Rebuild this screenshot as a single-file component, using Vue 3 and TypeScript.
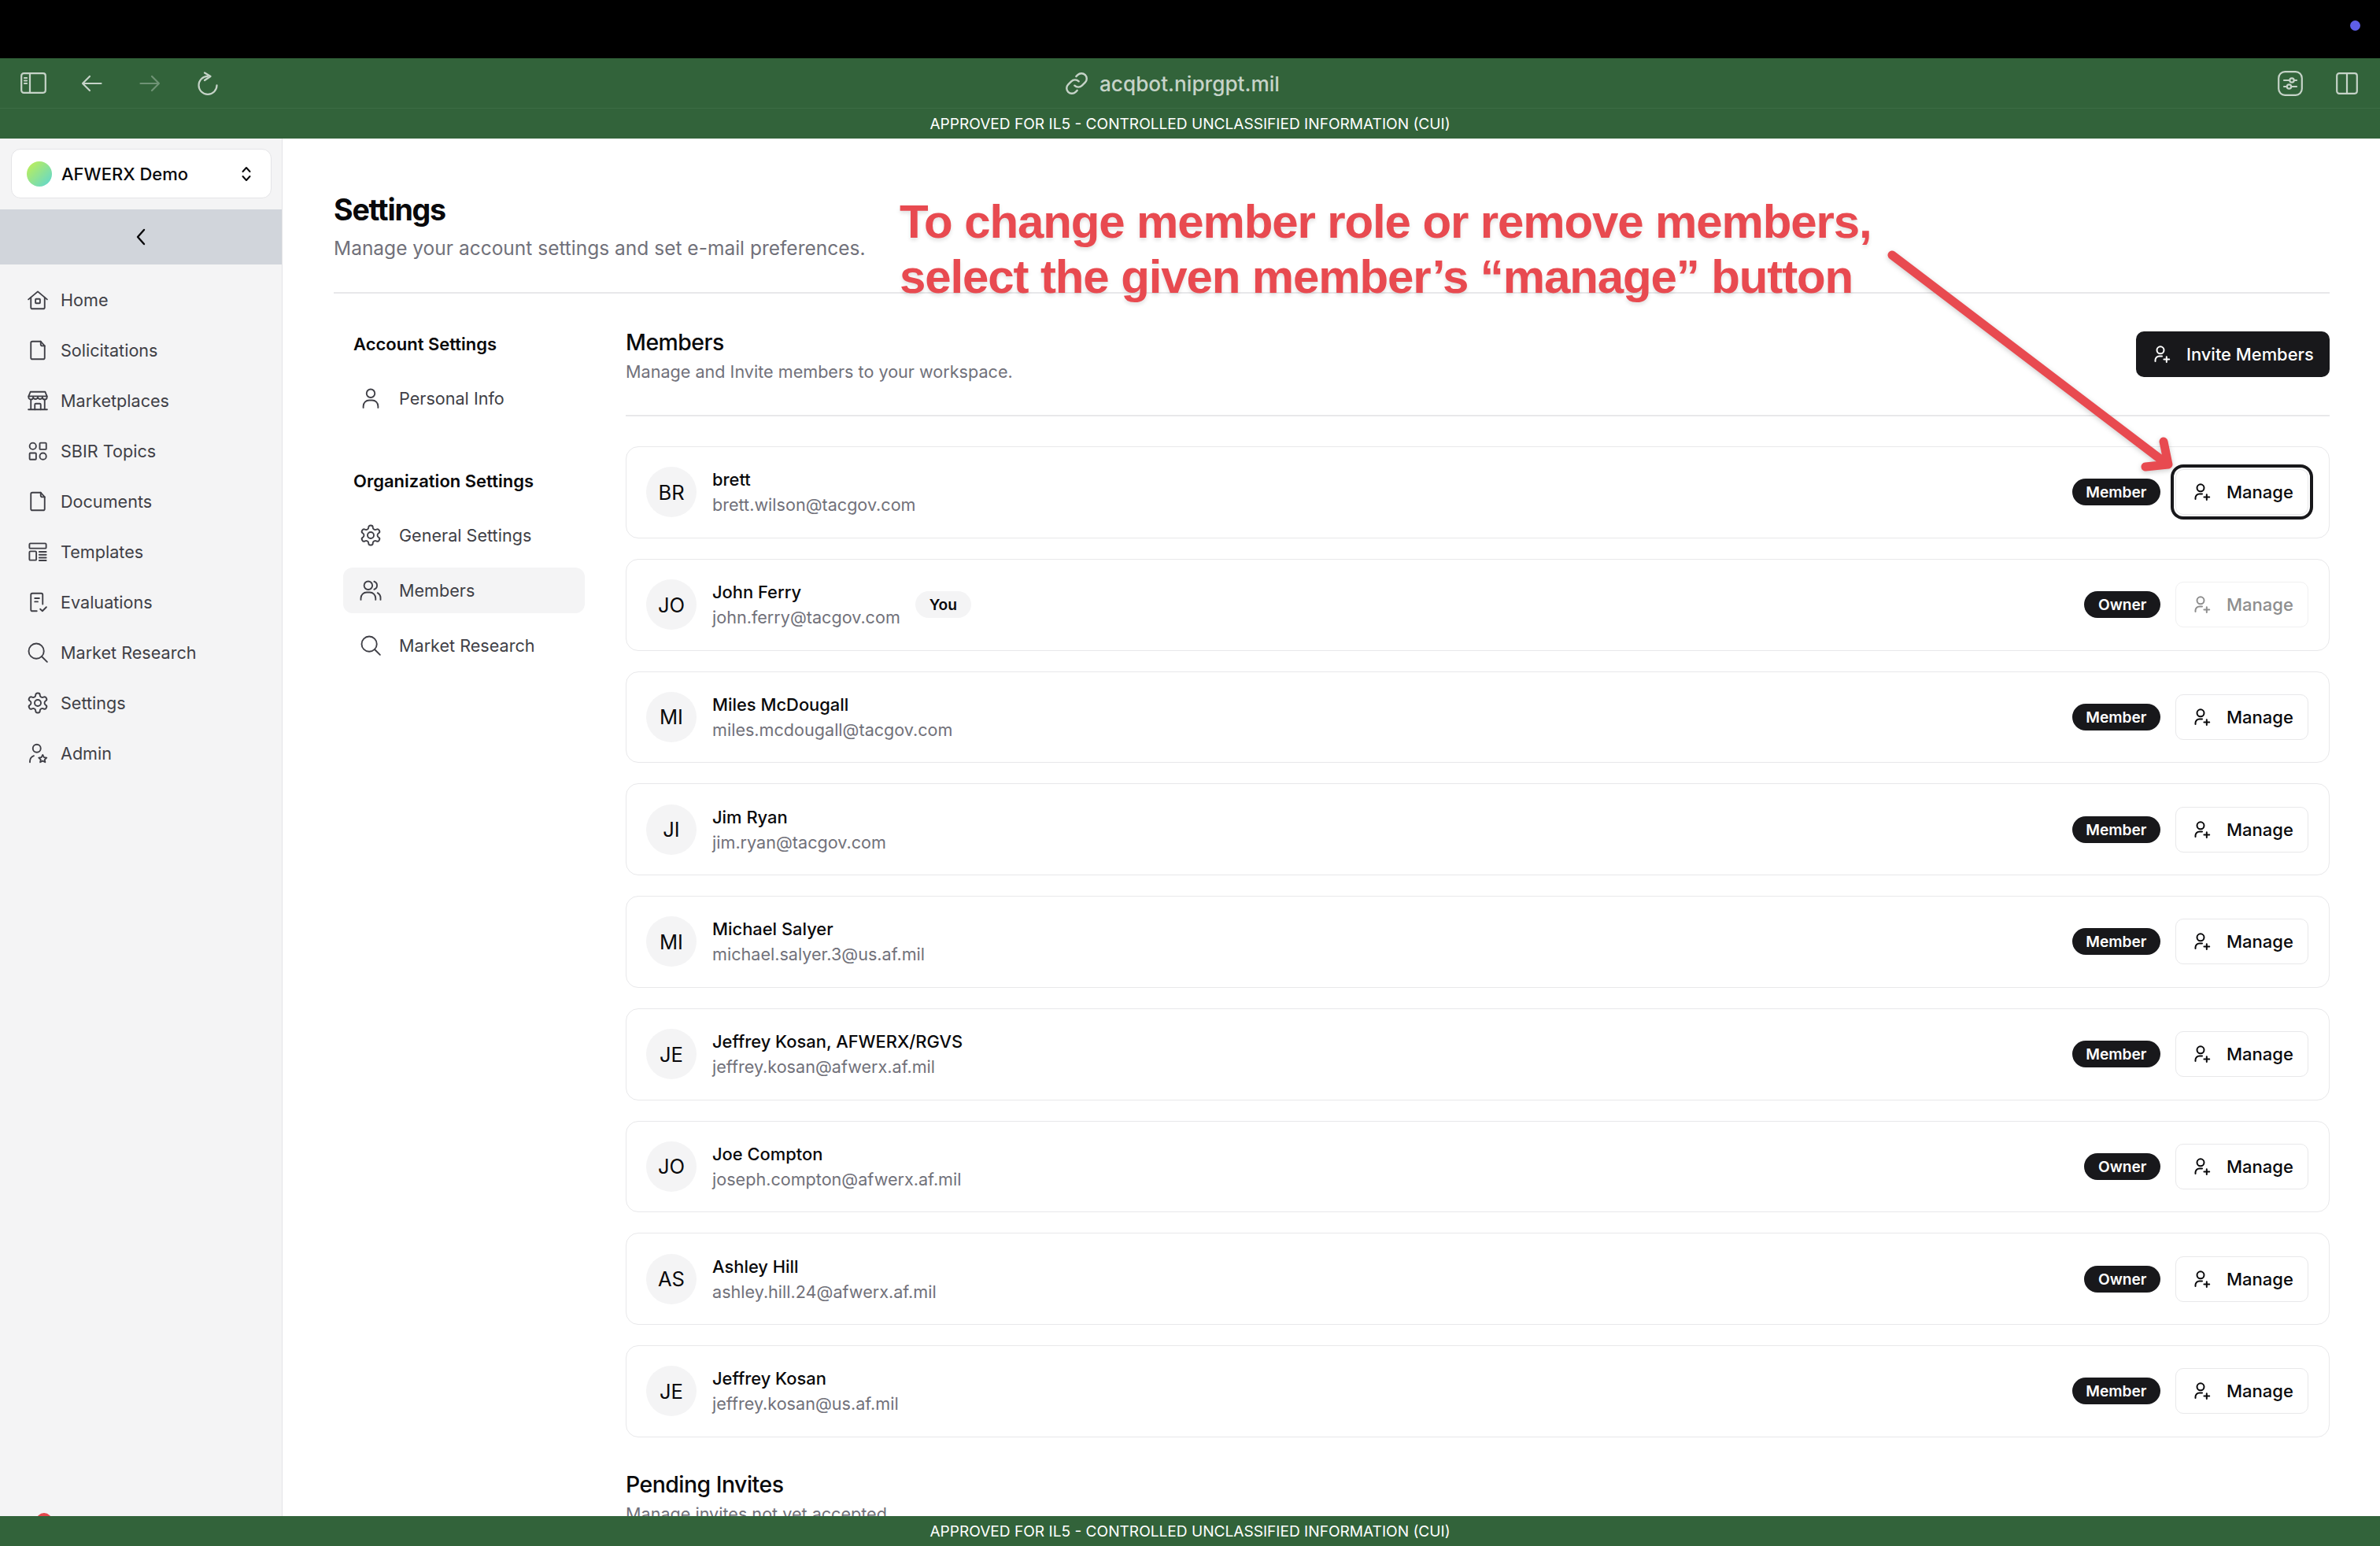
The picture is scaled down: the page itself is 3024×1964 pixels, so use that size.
<script setup lang="ts">
const icons: Record<string, string> = {
  home: '<path d="M2.5 11.5 12 3.5l9.5 8"/><path d="M5 9.8V19.5a1.5 1.5 0 0 0 1.5 1.5h11a1.5 1.5 0 0 0 1.5-1.5V9.8"/><rect x="9.7" y="11" width="4.6" height="4.4" rx=".6"/>',
  doc: '<path d="M5 4.5A1.5 1.5 0 0 1 6.5 3H15l4 4.5V19.500A1.500 1.500 0 0 1 17.500 21h-11A1.500 1.500 0 0 1 5 19.500z"/><path d="M15 3v3a1.500 1.500 0 0 0 1.500 1.500H19"/>',
  store: '<path d="M4.500 3h15l1.800 4.500v1a2.300 2.300 0 0 1-4.600 0 2.400 2.400 0 0 1-4.700 0 2.400 2.400 0 0 1-4.700 0 2.300 2.300 0 0 1-4.600 0v-1z"/><path d="M2.700 7.500h18.600M5 11v9.500M19 11v9.500M2.500 21h19"/><path d="M9 21v-5a1 1 0 0 1 1-1h4a1 1 0 0 1 1 1v5"/>',
  topics: '<circle cx="7" cy="7" r="3.300"/><rect x="14" y="3.700" width="6.600" height="6.600" rx=".8"/><rect x="3.700" y="14" width="6.600" height="6.600" rx=".8"/><circle cx="17.300" cy="17.300" r="3.300"/>',
  templates: '<rect x="3.500" y="3.500" width="17" height="5" rx="1"/><rect x="3.500" y="11.500" width="7" height="9" rx="1"/><path d="M13.500 12h7M13.500 15h7M13.500 18h7M13.500 20.800h7"/>',
  evals: '<path d="M11 21H6.500A1.500 1.500 0 0 1 5 19.500v-15A1.500 1.500 0 0 1 6.500 3h9A1.500 1.500 0 0 1 17 4.500V14"/><path d="M9 8h4.500M9 11.500h3"/><path d="m14.500 19 2.200 2 4-4"/>',
  search: '<circle cx="10.500" cy="10.500" r="7.700"/><path d="m16.200 16.200 5.300 5.300"/>',
  gear: '<path d="M12.220 2h-.44a2 2 0 0 0-2 2v.18a2 2 0 0 1-1 1.730l-.43.250a2 2 0 0 1-2 0l-.15-.080a2 2 0 0 0-2.730.730l-.22.380a2 2 0 0 0 .73 2.730l.15.100a2 2 0 0 1 1 1.720v.510a2 2 0 0 1-1 1.740l-.15.090a2 2 0 0 0-.73 2.730l.22.380a2 2 0 0 0 2.730.730l.15-.080a2 2 0 0 1 2 0l.43.250a2 2 0 0 1 1 1.730V20a2 2 0 0 0 2 2h.44a2 2 0 0 0 2-2v-.18a2 2 0 0 1 1-1.730l.43-.250a2 2 0 0 1 2 0l.15.080a2 2 0 0 0 2.730-.730l.22-.390a2 2 0 0 0-.73-2.730l-.15-.080a2 2 0 0 1-1-1.740v-.5a2 2 0 0 1 1-1.740l.15-.090a2 2 0 0 0 .73-2.730l-.22-.380a2 2 0 0 0-2.730-.730l-.15.080a2 2 0 0 1-2 0l-.43-.250a2 2 0 0 1-1-1.730V4a2 2 0 0 0-2-2z"/><circle cx="12" cy="12" r="3.200"/>',
  admin: '<circle cx="11" cy="7" r="4"/><path d="M4 21v-1a6 6 0 0 1 4-5.500"/><path d="m17 13.500 1.300 2.600 2.700.4-2 1.900.5 2.600-2.500-1.300-2.500 1.300.5-2.600-2-1.900 2.700-.4z"/>',
  user: '<circle cx="12" cy="7" r="4.200"/><path d="M4.500 21.500v-1.500a6 6 0 0 1 6-6h3a6 6 0 0 1 6 6v1.500"/>',
  users: '<circle cx="9.500" cy="7" r="4.200"/><path d="M2 21.500v-1.500a6 6 0 0 1 6-6h3a6 6 0 0 1 6 6v1.500"/><path d="M15.500 3a4.200 4.200 0 0 1 0 8M19 14.500a6 6 0 0 1 3 5.500v1.500"/>',
  userplus: '<circle cx="10" cy="6.800" r="4.500"/><path d="M3.500 21v-1.500a5 5 0 0 1 5-5h3.500"/><path d="M17.800 15.200v6.800M14.400 18.600h6.800"/>',
}

const sideNav = [
  { label: 'Home', icon: 'home' },
  { label: 'Solicitations', icon: 'doc' },
  { label: 'Marketplaces', icon: 'store' },
  { label: 'SBIR Topics', icon: 'topics' },
  { label: 'Documents', icon: 'doc' },
  { label: 'Templates', icon: 'templates' },
  { label: 'Evaluations', icon: 'evals' },
  { label: 'Market Research', icon: 'search' },
  { label: 'Settings', icon: 'gear' },
  { label: 'Admin', icon: 'admin' },
]

const members = [
  { initials: 'BR', name: 'brett', email: 'brett.wilson@tacgov.com', role: 'Member', focus: true },
  { initials: 'JO', name: 'John Ferry', email: 'john.ferry@tacgov.com', role: 'Owner', you: true, disabled: true },
  { initials: 'MI', name: 'Miles McDougall', email: 'miles.mcdougall@tacgov.com', role: 'Member' },
  { initials: 'JI', name: 'Jim Ryan', email: 'jim.ryan@tacgov.com', role: 'Member' },
  { initials: 'MI', name: 'Michael Salyer', email: 'michael.salyer.3@us.af.mil', role: 'Member' },
  { initials: 'JE', name: 'Jeffrey Kosan, AFWERX/RGVS', email: 'jeffrey.kosan@afwerx.af.mil', role: 'Member' },
  { initials: 'JO', name: 'Joe Compton', email: 'joseph.compton@afwerx.af.mil', role: 'Owner' },
  { initials: 'AS', name: 'Ashley Hill', email: 'ashley.hill.24@afwerx.af.mil', role: 'Owner' },
  { initials: 'JE', name: 'Jeffrey Kosan', email: 'jeffrey.kosan@us.af.mil', role: 'Member' },
]

const banner = 'APPROVED FOR IL5 - CONTROLLED UNCLASSIFIED INFORMATION (CUI)'
</script>

<template>
  <div class="app">
    <div class="notch"><span class="cam"></span></div>

    <header class="toolbar">
      <div class="tb-left">
        <svg class="tb-ico sb" viewBox="0 0 33 27"><rect x="1.200" y="1.200" width="30.600" height="24.600" rx="3"/><path d="M12 1.500v24M5 7h3M5 10.500h3M5 14h3"/></svg>
        <svg class="tb-ico ar" viewBox="0 0 27 22"><path d="M25.500 11H2M11 2 2 11l9 9"/></svg>
        <svg class="tb-ico ar dim" viewBox="0 0 27 22"><path d="M1.500 11H25M16 2l9 9-9 9"/></svg>
        <svg class="tb-ico rl" viewBox="0 0 26 30"><path d="M13 5.800A11.500 11.500 0 1 0 24.500 17.300"/><path d="M9 1.500 16.500 6 9 11"/></svg>
      </div>
      <div class="url">
        <svg class="link" viewBox="0 0 24 24"><path d="M10 14a5 5 0 0 0 7.100 0l3-3A5 5 0 0 0 13 3.900l-1.500 1.500"/><path d="M14 10a5 5 0 0 0-7.100 0l-3 3A5 5 0 0 0 11 20.100l1.500-1.500"/></svg>
        <span>acqbot.niprgpt.mil</span>
      </div>
      <div class="tb-right">
        <svg class="tb-ico flt" viewBox="0 0 32 32"><rect x="1.200" y="1.200" width="29.600" height="29.600" rx="8"/><path d="M8 12h6.500M21 12h3M8 20h3.500M18 20h6"/><circle cx="18" cy="12" r="2.700"/><circle cx="14.500" cy="20" r="2.700"/></svg>
        <svg class="tb-ico spl" viewBox="0 0 28 28"><rect x="1.200" y="1.200" width="25.600" height="25.600" rx="3"/><path d="M14 1.500v25"/></svg>
      </div>
    </header>

    <div class="banner">{{ banner }}</div>

    <div class="page">
      <aside class="sidebar">
        <button class="workspace">
          <span class="ws-dot"></span>
          <span class="ws-name">AFWERX Demo</span>
          <svg class="ws-caret" viewBox="0 0 14 22"><path d="m2.500 8 4.500-5 4.500 5M2.500 14l4.500 5 4.500-5"/></svg>
        </button>
        <div class="collapse">
          <svg viewBox="0 0 12 22"><path d="M10 2 2 11l8 9"/></svg>
        </div>
        <nav class="side-nav">
          <div v-for="item in sideNav" :key="item.label" class="side-item">
            <svg class="ico" viewBox="0 0 24 24" v-html="icons[item.icon]"></svg>
            <span>{{ item.label }}</span>
          </div>
        </nav>
        <span class="side-dot"></span>
      </aside>

      <main class="main">
        <h1 class="title">Settings</h1>
        <p class="subtitle">Manage your account settings and set e-mail preferences.</p>
        <div class="rule"></div>

        <div class="columns">
          <div class="sub-nav">
            <h3 class="group">Account Settings</h3>
            <div class="sub-item">
              <svg class="ico" viewBox="0 0 24 24" v-html="icons.user"></svg><span>Personal Info</span>
            </div>
            <h3 class="group second">Organization Settings</h3>
            <div class="sub-item">
              <svg class="ico" viewBox="0 0 24 24" v-html="icons.gear"></svg><span>General Settings</span>
            </div>
            <div class="sub-item active">
              <svg class="ico" viewBox="0 0 24 24" v-html="icons.users"></svg><span>Members</span>
            </div>
            <div class="sub-item">
              <svg class="ico" viewBox="0 0 24 24" v-html="icons.search"></svg><span>Market Research</span>
            </div>
          </div>

          <section class="content">
            <div class="sec-head">
              <div>
                <h2 class="sec-title">Members</h2>
                <p class="sec-sub">Manage and Invite members to your workspace.</p>
              </div>
              <button class="invite">
                <svg class="ico-sm" viewBox="0 0 24 24" v-html="icons.userplus"></svg>
                <span>Invite Members</span>
              </button>
            </div>

            <div class="cards">
              <article v-for="m in members" :key="m.email" class="card">
                <div class="avatar">{{ m.initials }}</div>
                <div class="who">
                  <div class="name">{{ m.name }}</div>
                  <div class="email">{{ m.email }}</div>
                </div>
                <span v-if="m.you" class="you">You</span>
                <span class="role">{{ m.role }}</span>
                <button class="manage" :class="{ focus: m.focus, disabled: m.disabled }">
                  <svg class="ico-sm" viewBox="0 0 24 24" v-html="icons.userplus"></svg>
                  <span>Manage</span>
                </button>
              </article>
            </div>

            <h2 class="sec-title pending">Pending Invites</h2>
            <p class="sec-sub">Manage invites not yet accepted.</p>
          </section>
        </div>
      </main>
    </div>

    <footer class="banner bottom">{{ banner }}</footer>

    <div class="note">To change member role or remove members,<br />select the given member’s “manage” button</div>
    <svg class="arrow" width="3024" height="1964" viewBox="0 0 3024 1964">
      <path d="M2404 324 2750 587M2749 561l6 29-29 3" />
    </svg>
  </div>
</template>

<style>
html, body { margin: 0; background: #fff; }
</style>

<style scoped>
.app {
  position: relative;
  width: 3024px;
  height: 1964px;
  overflow: hidden;
  display: flex;
  flex-direction: column;
  font-family: Inter, "Liberation Sans", sans-serif;
  color: #09090b;
}
.notch { height: 74px; background: #000; display: flex; justify-content: flex-end; flex: none; }
.cam { width: 13px; height: 13px; border-radius: 50%; background: #5f5fe8; margin: 26px 25px 0 0; }

.toolbar {
  height: 64px;
  flex: none;
  background: #32633a;
  border-bottom: 1px solid #3d6c44;
  box-sizing: border-box;
  display: flex;
  align-items: center;
  justify-content: space-between;
  position: relative;
  padding: 0 28px 0 26px;
}
.tb-left, .tb-right { display: flex; align-items: center; }
.tb-ico { fill: none; stroke: #c6d3c8; stroke-width: 2.2; stroke-linecap: round; stroke-linejoin: round; display: block; }
.sb { width: 33px; height: 27px; margin-right: 44px; }
.ar { width: 27px; height: 22px; margin-right: 47px; }
.ar.dim { stroke: #6f9375; margin-right: 47px; }
.rl { width: 26px; height: 30px; }
.flt { width: 32px; height: 32px; margin-right: 42px; }
.spl { width: 28px; height: 28px; }
.url {
  position: absolute;
  left: 1352px;
  top: 0;
  height: 64px;
  display: flex;
  align-items: center;
  gap: 13px;
  font-size: 26.2px;
  font-weight: 500;
  color: #c6d3c8;
}
.link { width: 32px; height: 32px; fill: none; stroke: #c6d3c8; stroke-width: 1.8; stroke-linecap: round; }

.banner {
  flex: none;
  height: 38px;
  background: #32633a;
  color: #fff;
  font-size: 19.1px;
  line-height: 38px;
  text-align: center;
}
.page { height: 1750px; flex: none; display: flex; overflow: hidden; }

.sidebar {
  position: relative;
  width: 359px;
  flex: none;
  box-sizing: border-box;
  background: #f4f4f5;
  border-right: 1px solid #e4e4e7;
  padding-top: 13px;
}
.workspace {
  display: flex;
  align-items: center;
  width: 331px;
  height: 63px;
  margin: 0 0 14px 14px;
  padding: 0 24px 0 19px;
  box-sizing: border-box;
  background: #fff;
  border: 1.6px solid #e4e4e7;
  border-radius: 12px;
  font: 500 22px Inter, sans-serif;
  color: #09090b;
}
.ws-dot { width: 32px; height: 32px; border-radius: 50%; background: linear-gradient(135deg, #c4f04f, #5cd6d6); flex: none; }
.ws-name { margin-left: 12px; flex: 1; text-align: left; }
.ws-caret { width: 14px; height: 22px; fill: none; stroke: #09090b; stroke-width: 2; stroke-linecap: round; stroke-linejoin: round; }
.collapse { height: 70px; background: #d1d5db; display: flex; align-items: center; justify-content: center; }
.collapse svg { width: 12px; height: 22px; fill: none; stroke: #09090b; stroke-width: 2.4; stroke-linecap: round; stroke-linejoin: round; }
.side-nav { padding-top: 13px; }
.side-item {
  height: 64px;
  display: flex;
  align-items: center;
  gap: 14px;
  padding-left: 33px;
  font-size: 21.6px;
  color: #3f3f46;
}
.side-dot { position: absolute; left: 46px; bottom: -16px; width: 20px; height: 20px; border-radius: 50%; background: #e5484d; }
.ico { width: 30px; height: 30px; flex: none; fill: none; stroke: #3f3f46; stroke-width: 1.5; stroke-linecap: round; stroke-linejoin: round; }
.ico-sm { width: 24px; height: 24px; flex: none; fill: none; stroke: currentColor; stroke-width: 2; stroke-linecap: round; stroke-linejoin: round; }

.main { flex: 1; min-width: 0; padding: 67px 64px 0 65px; overflow: hidden; }
.title { margin: 0; font-size: 37.6px; line-height: 48px; font-weight: 700; letter-spacing: -1.2px; }
.subtitle { margin: 7px 0 0; font-size: 24.5px; line-height: 34px; color: #71717a; }
.rule { height: 2px; background: #e8e8ea; margin-top: 39px; }

.columns { display: flex; }
.sub-nav { width: 307px; margin-left: 12px; padding-top: 47px; flex: none; }
.group { margin: 0 0 23px 13px; font-size: 22px; line-height: 34px; font-weight: 600; color: #09090b; }
.group.second { margin-top: 59px; }
.sub-item {
  height: 58px;
  margin-bottom: 12px;
  border-radius: 12px;
  display: flex;
  align-items: center;
  gap: 21px;
  padding-left: 20px;
  font-size: 21.6px;
  color: #3f3f46;
}
.sub-item.active { background: #f4f4f5; }

.content { flex: 1; min-width: 0; margin-left: 52px; padding-top: 45px; }
.sec-head {
  display: flex;
  justify-content: space-between;
  align-items: flex-start;
  padding-bottom: 39px;
  border-bottom: 2px solid #e8e8ea;
}
.sec-title { margin: 0; font-size: 28.4px; line-height: 34px; font-weight: 500; letter-spacing: -.5px; }
.sec-sub { margin: 4px 0 0; font-size: 21.6px; line-height: 32px; color: #71717a; }
.invite {
  margin-top: 3px;
  height: 58px;
  width: 246px;
  box-sizing: border-box;
  padding: 0 0 0 21px;
  display: flex;
  align-items: center;
  gap: 19px;
  background: #18181b;
  color: #fff;
  border: 0;
  border-radius: 10px;
  font: 500 21.9px Inter, sans-serif;
}
.cards { margin-top: 38px; display: flex; flex-direction: column; gap: 26px; }
.card {
  height: 116.75px;
  box-sizing: border-box;
  border: 1.6px solid #e8e8ea;
  border-radius: 16px;
  padding: 0 26px 0 25px;
  display: flex;
  align-items: center;
}
.avatar {
  width: 64px;
  height: 64px;
  border-radius: 50%;
  background: #f4f4f5;
  display: flex;
  align-items: center;
  justify-content: center;
  font-size: 25.6px;
  flex: none;
}
.who { margin-left: 20px; }
.name { font-size: 21.9px; line-height: 32px; font-weight: 500; }
.email { font-size: 21.6px; line-height: 32px; color: #71717a; }
.you {
  margin-left: 19px;
  height: 34px;
  padding: 0 18px;
  border-radius: 17px;
  background: #f4f4f5;
  font-size: 19.2px;
  font-weight: 600;
  line-height: 34px;
}
.role {
  margin-left: auto;
  height: 34px;
  padding: 0 17.5px;
  border-radius: 17px;
  background: #18181b;
  color: #fff;
  font-size: 19.2px;
  font-weight: 600;
  line-height: 34px;
}
.manage {
  margin-left: 19px;
  width: 169px;
  height: 58px;
  box-sizing: border-box;
  padding: 0 0 0 21px;
  display: flex;
  align-items: center;
  gap: 19px;
  background: #fff;
  color: #09090b;
  border: 1.6px solid #e8e8ea;
  border-radius: 10px;
  font: 500 22px Inter, sans-serif;
}
.manage.focus { box-shadow: 0 0 0 2px #fff, 0 0 0 6px #18181b; }
.manage.disabled { color: #8e8e8e; border-color: #f0f0f1; }
.pending { margin-top: 43px; }

.note {
  position: absolute;
  left: 1143px;
  top: 247px;
  font-family: "Liberation Sans", Arial, sans-serif;
  font-weight: 700;
  font-size: 60px;
  line-height: 70px;
  letter-spacing: -1.12px;
  color: #e84a50;
  text-shadow: 0 3px 5px rgba(0, 0, 0, .12);
  white-space: nowrap;
}
.arrow { position: absolute; left: 0; top: 0; pointer-events: none; }
.arrow path { fill: none; stroke: #e84a50; stroke-width: 11; stroke-linecap: round; stroke-linejoin: round; filter: drop-shadow(0 2px 3px rgba(0,0,0,.2)); }
</style>
